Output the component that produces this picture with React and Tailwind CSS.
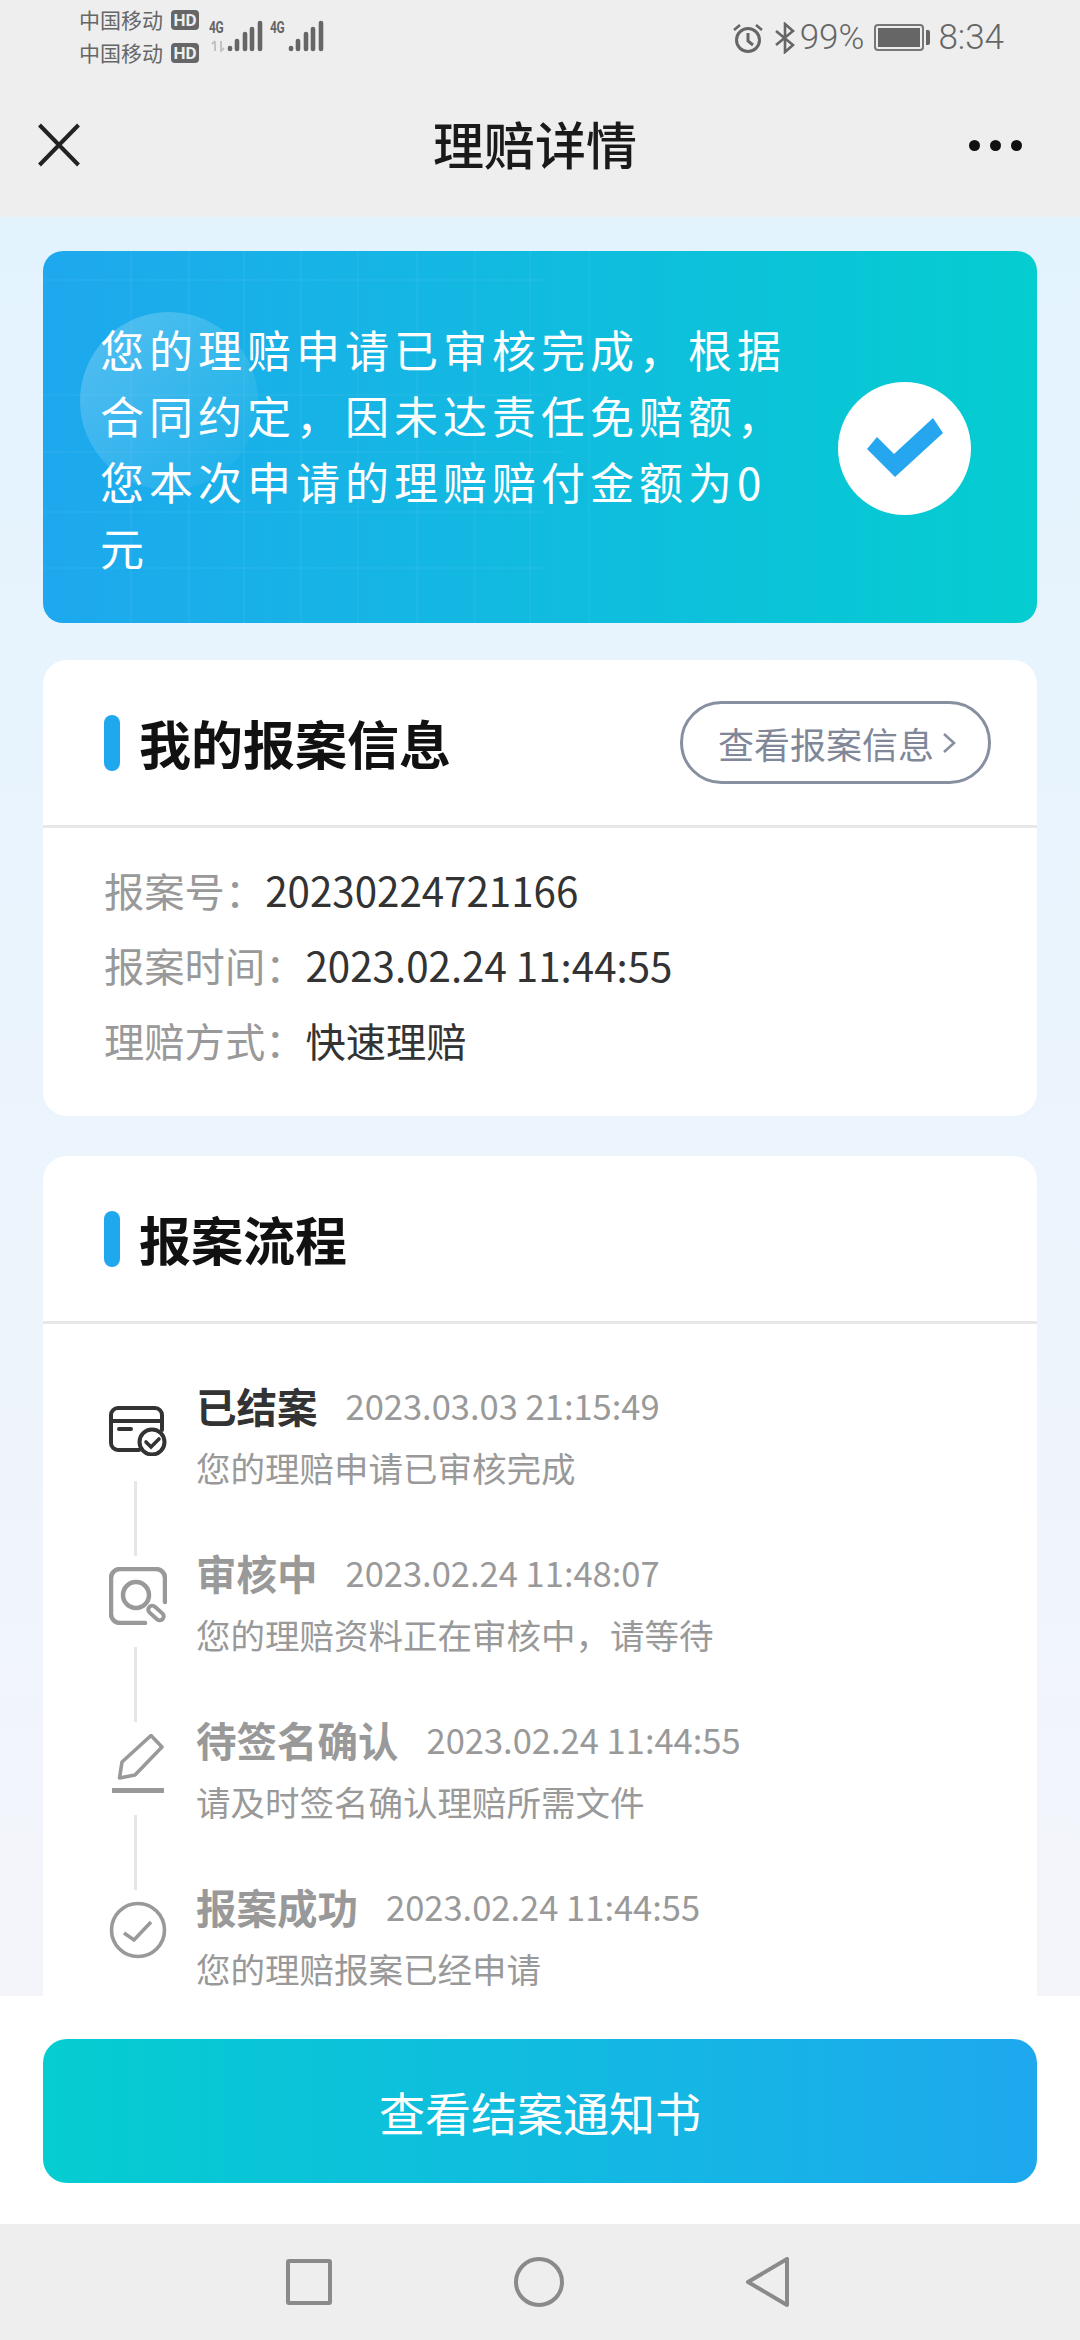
import React from 'react';

// full-width punctuation, kept as escapes so it can't get normalised to ASCII
const COMMA = '\uFF0C';
const COLON = '\uFF1A';

const steps = [
  { title: '已结案', time: '2023.03.03 21:15:49', desc: '您的理赔申请已审核完成', active: true },
  { title: '审核中', time: '2023.02.24 11:48:07', desc: `您的理赔资料正在审核中${COMMA}请等待` },
  { title: '待签名确认', time: '2023.02.24 11:44:55', desc: '请及时签名确认理赔所需文件' },
  { title: '报案成功', time: '2023.02.24 11:44:55', desc: '您的理赔报案已经申请' },
];

const bannerText = `您的理赔申请已审核完成${COMMA}根据合同约定${COMMA}因未达责任免赔额${COMMA}您本次申请的理赔赔付金额为0元`;

const Signal = ({ arrows }) => (
  <div className="flex items-start">
    <div className="relative w-[18px] h-[32px]">
      <span className="block text-[16px] leading-[14px] mt-[1px] font-bold text-[#666] font-['Roboto',sans-serif] tracking-[-0.5px] scale-x-75 origin-left">4G</span>
      {arrows && (
        <svg className="absolute left-[1px] top-[20px]" width="16" height="12" viewBox="0 0 16 12">
          <path d="M5 1v10M2 4l3-3M11 1v10l3-3" stroke="#c4c4c4" strokeWidth="2" fill="none" />
        </svg>
      )}
    </div>
    <svg className="mt-[-1px]" width="36" height="33" viewBox="0 0 36 33">
      <g stroke="#666" strokeWidth="4.6" strokeLinecap="round">
        <path d="M3 30v-1" />
        <path d="M10 30v-8" />
        <path d="M18 30v-15" />
        <path d="M25 30v-20" />
        <path d="M33 30v-26" />
      </g>
    </svg>
  </div>
);

const Carrier = () => (
  <div className="flex items-center h-[33px]">
    <span className="text-[21px] leading-[33px] text-[#666] w-[92px]">中国移动</span>
    <span className="w-[28px] h-[20px] rounded-[4px] bg-[#666] text-[#eee] text-[17px] leading-[20px] font-bold text-center font-['Roboto',sans-serif]">HD</span>
  </div>
);

const StatusBar = () => (
  <div className="h-[75px] flex justify-between pl-[79px] pr-[76px]">
    <div className="flex">
      <div className="pt-[3px]">
        <Carrier />
        <Carrier />
      </div>
      <div className="flex pt-[20px] ml-[10px] gap-[7px]">
        <Signal arrows />
        <Signal />
      </div>
    </div>
    <div className="flex items-center text-[#666] text-[35px] font-['Roboto',sans-serif] font-light">
      <svg width="32" height="32" viewBox="0 0 32 32" fill="none" stroke="#666" strokeWidth="3">
        <circle cx="16" cy="18" r="11.5" />
        <path d="M16 11v8l5 4" />
        <path d="M2 8l6-5M30 8l-6-5" strokeWidth="2.6" />
      </svg>
      <svg className="ml-[10px]" width="22" height="32" viewBox="0 0 22 32" fill="none" stroke="#666" strokeWidth="2.6">
        <path d="M2 9l17 14-8 7V2l8 7L2 23" />
      </svg>
      <span className="ml-[4px] leading-none">99%</span>
      <div className="ml-[10px] flex items-center">
        <div className="w-[50px] h-[27px] border-2 border-[#777] rounded-[4px] p-[2px]">
          <div className="w-full h-full bg-[#666]" />
        </div>
        <div className="w-[4px] h-[15px] bg-[#666] ml-[2px] rounded-r-[2px]" />
      </div>
      <span className="ml-[8px] leading-none">8:34</span>
    </div>
  </div>
);

const Header = () => (
  <div className="h-[142px] flex items-center justify-between pl-[38px] pr-[58px] relative">
    <svg className="mt-[-2px]" width="42" height="44" viewBox="0 0 42 44" fill="none" stroke="#222" strokeWidth="4">
      <path d="M1.5 2l39 40M40.5 2l-39 40" />
    </svg>
    <h1 className="text-[51px] font-medium text-[#1a1a1a] absolute left-[433px] top-[30px] leading-[76px]">理赔详情</h1>
    <div className="flex gap-[10px] mt-[-2px]">
      <span className="w-[11px] h-[11px] rounded-full bg-[#111]" />
      <span className="w-[11px] h-[11px] rounded-full bg-[#111]" />
      <span className="w-[11px] h-[11px] rounded-full bg-[#111]" />
    </div>
  </div>
);

const Banner = () => (
  <div className="relative overflow-hidden rounded-[20px] bg-gradient-to-r from-[#1ea8ee] to-[#05cdd0] flex items-center justify-between pl-[57px] pr-[66px] pt-[65px] pb-[43px]">
    {/* faint grid + bubble behind the text */}
    <svg className="absolute left-0 top-0" width="620" height="373" fill="none" stroke="#fff" strokeOpacity="0.04" strokeWidth="2">
      <path d="M88 0v373M146 0v373M201 0v373M258 0v373M315 0v373M374 0v373M432 0v373M487 0v373M546 0v373" />
      <path d="M0 29h500M0 144h500M0 201h520M0 261h500M0 317h500" />
    </svg>
    <div className="absolute left-[37px] top-[61px] w-[178px] h-[178px] rounded-full bg-gradient-to-br from-white/25 to-white/0" />
    <p className="relative w-[704px] text-white text-[44px] leading-[66px] tracking-[5px]">
      {bannerText}
    </p>
    <div className="relative w-[133px] h-[133px] rounded-full bg-white flex items-center justify-center shrink-0">
      <svg width="76" height="60" viewBox="0 0 76 60" fill="#26a6ee">
        <path d="M0 31l10-12 17 17L66 0l10 15-48 44z" />
      </svg>
    </div>
  </div>
);

const CardTitle = ({ children, right }) => (
  <div className="h-[168px] border-b-[3px] border-[#e8e8ea] flex items-center justify-between pl-[61px] pr-[46px]">
    <div className="flex items-center gap-[19px]">
      <span className="w-[16px] h-[56px] rounded-full bg-[#1fa8ee]" />
      <h2 className="text-[52px] leading-[70px] font-bold text-[#111]">{children}</h2>
    </div>
    {right}
  </div>
);

const InfoRow = ({ label, value }) => (
  <div className="text-[40.3px] leading-[75px] whitespace-nowrap">
    <span className="text-[#999]">{label}{COLON}</span>
    <span className="text-[#333]">{value}</span>
  </div>
);

const StepIcons = () => (
  <div className="w-[58px] flex flex-col items-center pt-[28px] shrink-0">
    <svg width="58" height="50" viewBox="0 0 58 50" fill="none" stroke="#333" strokeWidth="4" strokeLinecap="round">
      <path d="M30 44H9a7 7 0 0 1-7-7V9a7 7 0 0 1 7-7h37a7 7 0 0 1 7 7v15" />
      <path d="M2 15h51" />
      <path d="M10 23h12" />
      <circle cx="43" cy="36" r="12.5" />
      <path d="M37 36l5 5 8-8" strokeWidth="3.6" />
    </svg>
    <span className="block w-[3px] h-[75px] mt-[25px] mr-[5px] bg-[#e6e6e6]" />
    <svg className="mt-[11px]" width="58" height="58" viewBox="0 0 58 58" fill="none" stroke="#999" strokeWidth="4.5" strokeLinecap="round">
      <path d="M56 35V11a9 9 0 0 0-9-9H11a9 9 0 0 0-9 9v36a9 9 0 0 0 9 9h25" />
      <circle cx="27" cy="28" r="13" />
      <rect x="38" y="42" width="18" height="8" rx="4" transform="rotate(42 47 46)" strokeWidth="4" />
    </svg>
    <span className="block w-[3px] h-[75px] mt-[22px] mr-[5px] bg-[#e6e6e6]" />
    <svg className="mt-[12px]" width="52" height="59" viewBox="0 0 52 59" fill="none" stroke="#999" strokeWidth="3.6" strokeLinejoin="round">
      <path d="M7.5 44L10 28 39 1.5 50 13 23 41z" />
      <path d="M1 56.5h50" strokeWidth="5" strokeLinecap="round" />
    </svg>
    <span className="block w-[3px] h-[75px] mt-[22px] mr-[5px] bg-[#e6e6e6]" />
    <svg className="mt-[11px]" width="58" height="58" viewBox="0 0 58 58" fill="none" stroke="#999" strokeWidth="3.6">
      <circle cx="29" cy="29" r="26.5" />
      <path d="M15 32l10 7 17-18" />
    </svg>
  </div>
);

const Step = ({ title, time, desc, active }) => (
  <div className="h-[167px] whitespace-nowrap">
    <div className="flex items-center h-[56px] gap-[28px]">
      <span className={active ? 'text-[40.5px] font-bold text-[#333]' : 'text-[40.5px] font-bold text-[#999]'}>{title}</span>
      <span className="text-[34.5px] text-[#999]">{time}</span>
    </div>
    <p className="mt-[9px] text-[34.5px] leading-[48px] text-[#999]">{desc}</p>
  </div>
);

export default function App() {
  return (
    <div className="w-[1080px] h-[2340px] flex flex-col overflow-hidden bg-white font-['Noto_Sans_CJK_SC',sans-serif]">
      <div className="bg-[#eeeeee] shrink-0">
        <StatusBar />
        <Header />
      </div>

      <div className="flex-1 min-h-0 overflow-hidden px-[43px] pt-[34px] bg-gradient-to-b from-[#e3f3fe] to-[#f4f5fb]">
        <Banner />

        <div className="mt-[37px] bg-white rounded-[24px] h-[456px]">
          <CardTitle
            right={
              <div className="w-[311px] h-[83px] rounded-full border-[3px] border-[#878fa1] flex items-center pl-[35px] text-[36px] text-[#7f8798]">
                <span>查看报案信息</span>
                <svg className="ml-[8px]" width="14" height="24" viewBox="0 0 14 24" fill="none" stroke="#878fa1" strokeWidth="2.6">
                  <path d="M2 3l10 9-10 9" />
                </svg>
              </div>
            }
          >
            我的报案信息
          </CardTitle>
          <div className="pl-[61px] pt-[24px]">
            <InfoRow label="报案号" value="20230224721166" />
            <InfoRow label="报案时间" value="2023.02.24 11:44:55" />
            <InfoRow label="理赔方式" value="快速理赔" />
          </div>
        </div>

        <div className="mt-[40px] bg-white rounded-t-[24px]">
          <CardTitle>报案流程</CardTitle>
          <div className="flex pl-[66px] pt-[54px] gap-[29px]">
            <StepIcons />
            <div>
              {steps.map((s) => (
                <Step key={s.title} {...s} />
              ))}
            </div>
          </div>
        </div>
      </div>

      <div className="h-[228px] shrink-0 bg-white px-[43px] pt-[43px]">
        <button className="w-full h-[144px] rounded-[24px] bg-gradient-to-r from-[#05cdd0] to-[#1ea8ee] text-white text-[46px]">
          查看结案通知书
        </button>
      </div>

      <div className="h-[116px] shrink-0 bg-[#eeeeee] flex items-center justify-center gap-[182px] pr-[4px]">
        <span className="w-[46px] h-[46px] border-4 border-[#8a8a8a] rounded-[3px]" />
        <span className="w-[50px] h-[50px] border-4 border-[#8a8a8a] rounded-full" />
        <svg width="44" height="50" viewBox="0 0 44 50" fill="none" stroke="#8a8a8a" strokeWidth="4" strokeLinejoin="round">
          <path d="M41 2v46L2 25z" />
        </svg>
      </div>
    </div>
  );
}
